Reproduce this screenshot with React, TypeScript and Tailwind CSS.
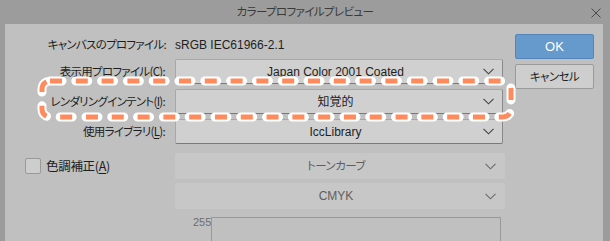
import React from 'react';

const jp = "font-['Noto_Sans_CJK_JP','Noto_Sans',sans-serif] [font-feature-settings:'palt']";

// Chevron used in every dropdown
const Chevron = ({ dim }: { dim?: boolean }) => (
  <svg width="11" height="7" viewBox="0 0 11 7" className="shrink-0">
    <path d="M0.5 0.8 L5.5 5.8 L10.5 0.8" fill="none" stroke={dim ? '#6a6a6a' : '#444'} strokeWidth="1.1" />
  </svg>
);

const Select = ({ value, disabled }: { value: React.ReactNode; disabled?: boolean }) => (
  <div
    className={
      disabled
        ? 'flex h-[26px] w-[330px] items-center rounded-[2px] bg-[#c7c7c7] pr-[9px] text-[#5e5e5e]'
        : 'flex h-[25px] w-[328px] items-center rounded-[2px] border border-[#a8a8a8] border-b-[#7a7a7a] border-r-[#8a8a8a] bg-[#d0d0d0] pr-[8px] text-[#1e1e1e]'
    }
  >
    <div className="flex-1 pl-[12px] text-center leading-normal">{value}</div>
    <Chevron dim={disabled} />
  </div>
);

const Mn = ({ c }: { c: string }) => <span className="underline underline-offset-2">{c}</span>;

const Row = ({ label, children }: { label: React.ReactNode; children: React.ReactNode }) => (
  <div className="flex items-center">
    <div className="w-[161px] pr-[1px] text-right tracking-[-0.7px] whitespace-nowrap text-[#1e1e1e]">{label}</div>
    <div className="ml-[9px]">{children}</div>
  </div>
);

export default function App() {
  return (
    <div className={`relative flex h-[241px] w-[610px] flex-col overflow-hidden bg-[#9c9c9c] text-[11.5px] leading-normal ${jp}`}>
      <div className="relative flex h-[24px] shrink-0 items-center justify-center text-[11.5px] tracking-[-0.6px] text-[#3a3a3a]">
        カラープロファイルプレビュー
        <svg width="10" height="10" viewBox="0 0 10 10" className="absolute right-[9px] top-[8px]">
          <path d="M0.5 0.5 L9.5 9.5 M9.5 0.5 L0.5 9.5" stroke="#4a4a4a" strokeWidth="1" />
        </svg>
      </div>

      <div className="flex flex-1 pl-[5px] pr-[7px]">
        <div className="flex flex-1 bg-[#c0c0c0]">
          <div className="flex w-[500px] flex-col">
            <div className="mt-[11px] flex h-[20px] items-center">
              <div className="w-[161px] text-right tracking-[-0.7px] whitespace-nowrap text-[#1e1e1e]">キャンバスのプロファイル:</div>
              <div className="ml-[9px] font-['Liberation_Sans',sans-serif] text-[12px] text-[#1e1e1e]">sRGB IEC61966-2.1</div>
            </div>
            <div className="mt-[4px] flex flex-col gap-[5px]">
              <Row label={<>表示用プロファイル(<Mn c="C" />):</>}>
                <Select value={<span className="font-['Liberation_Sans',sans-serif] text-[12px]">Japan Color 2001 Coated</span>} />
              </Row>
              <Row label={<>レンダリングインテント(<Mn c="I" />):</>}>
                <Select value={<span className="text-[12px]">知覚的</span>} />
              </Row>
              <Row label={<>使用ライブラリ(<Mn c="L" />):</>}>
                <Select value={<span className="font-['Liberation_Sans',sans-serif] text-[12px]">IccLibrary</span>} />
              </Row>
            </div>
            <div className="mt-[9px] flex items-center">
              <div className="flex w-[161px] items-center gap-[5px] pl-[20px] text-[12.5px] tracking-[-0.3px] text-[#1e1e1e]">
                <div className="h-[16px] w-[16px] rounded-[2px] border border-[#9a9a9a] bg-[#cdcdcd]" />
                <span>色調補正(<Mn c="A" />)</span>
              </div>
              <div className="ml-[9px]">
                <Select disabled value={<span className="tracking-[-0.5px]">トーンカーブ</span>} />
              </div>
            </div>
            <div className="mt-[4px] flex">
              <div className="ml-[170px]">
                <Select disabled value={<span className="font-['Liberation_Sans',sans-serif] text-[12px]">CMYK</span>} />
              </div>
            </div>
            <div className="mt-[8px] flex flex-1 items-start pl-[188px]">
              <div className="w-[18px] font-['Liberation_Sans',sans-serif] text-[11px] leading-none text-[#6e6e6e]">255</div>
              <div className="h-full w-[290px] border border-b-0 border-[#999]" />
            </div>
          </div>

          <div className="ml-[10px] mt-[10px] flex flex-col gap-[5px]">
            <div className="flex h-[25px] w-[79px] items-center justify-center rounded-[2px] border border-[#5585b8] bg-[#6699cc] font-['Liberation_Sans',sans-serif] text-[13px] text-white">
              OK
            </div>
            <div className="flex h-[25px] w-[79px] items-center justify-center rounded-[2px] border border-[#9a9a9a] bg-[#cecece] tracking-[-0.6px] text-[#1e1e1e]">
              キャンセル
            </div>
          </div>
        </div>
      </div>

      {/* annotation drawn over the dialog */}
      <svg width="610" height="241" className="pointer-events-none absolute left-0 top-0">
        <rect x="42" y="81" width="469" height="36" rx="8" fill="none" stroke="#ffffff" strokeWidth="9" strokeDasharray="12 13.8" strokeLinecap="round" />
        <rect x="42" y="81" width="469" height="36" rx="8" fill="none" stroke="#ff8a5c" strokeWidth="5" strokeDasharray="12 13.8" />
      </svg>
    </div>
  );
}
